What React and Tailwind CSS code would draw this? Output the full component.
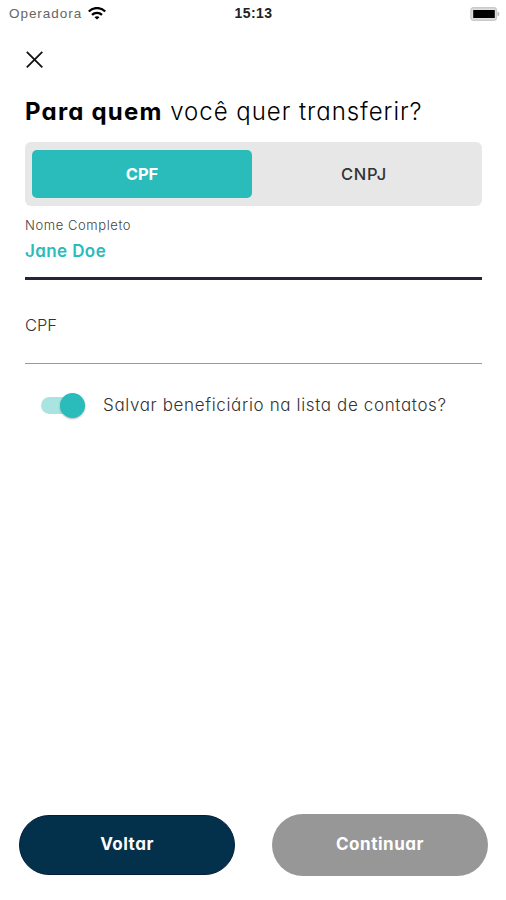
import { useState } from "react";

const WifiIcon = () => (
  <svg width="18" height="14" viewBox="0 0 18 14" fill="none" stroke="#000" strokeWidth="2.3">
    <path d="M.8 4.5C5.2-.1 12.8-.1 17.2 4.5" />
    <path d="M4 7.8c2.8-2.7 7.2-2.7 10 0" />
    <path d="M9 12.6 6.5 10.2c1.4-1.3 3.6-1.3 5 0z" fill="#000" stroke="none" />
  </svg>
);

const BatteryIcon = () => (
  <svg width="30" height="14" viewBox="0 0 30 14">
    <rect x="0.9" y="0.75" width="25.5" height="12.5" rx="2.5" fill="#dedede" stroke="#cacaca" strokeWidth="1.3" />
    <path d="M27.5 4.5c2.4.8 2.4 4.2 0 5z" fill="#b5b5b5" />
    <rect x="3.2" y="3" width="21.6" height="8" rx="0.3" fill="#000" />
  </svg>
);

const CloseIcon = () => (
  <svg width="18" height="18" viewBox="0 0 18 18" fill="none" stroke="#111" strokeWidth="1.8">
    <path d="M.8.8l15.5 15.5M16.3.8L.8 16.3" />
  </svg>
);

const StatusBar = () => (
  <div className="flex h-[27px] items-center pl-[9px] pr-[6px]">
    <div className="flex flex-1 items-center gap-[5px]">
      <span className="mt-px w-[74px] whitespace-nowrap font-['Liberation_Sans'] text-[13.5px] tracking-[0.95px] text-[#666]">
        Operadora
      </span>
      <WifiIcon />
    </div>
    <span className="mr-0.5 font-['Liberation_Sans'] text-[14px] font-bold tracking-[0.4px] text-[#222]">
      15:13
    </span>
    <div className="flex flex-1 justify-end">
      <BatteryIcon />
    </div>
  </div>
);

const App = () => {
  const [type, setType] = useState("CPF");
  const [save, setSave] = useState(true);

  return (
    <div className="flex h-[900px] w-[506px] flex-col overflow-hidden bg-white font-['Inter',sans-serif] [font-feature-settings:'cv11']">
      <StatusBar />

      <main className="flex flex-col pl-[25px] pr-6">
        <button className="mt-6 ml-px h-[18px] w-[18px]" aria-label="Fechar">
          <CloseIcon />
        </button>

        <h1 className="mt-[27px] h-8 whitespace-nowrap text-[24px] leading-8 font-light tracking-[0.96px] text-black">
          <span className="font-bold tracking-[1.2px]">Para quem</span> você quer transferir?
        </h1>

        {/* Tipo de documento */}
        <div className="mt-[14px] flex h-16 gap-[2px] rounded-md bg-[#e7e7e7] py-2 pr-[5px] pl-[7px]">
          {["CPF", "CNPJ"].map((item) => (
            <button
              key={item}
              onClick={() => setType(item)}
              className={`h-12 w-[220px] rounded-[5px] ${
                type === item
                  ? "bg-[#2abbbb] text-[16.5px] font-bold text-white"
                  : "text-[16.5px] font-medium tracking-[0.7px] text-[#333]"
              }`}
            >
              {item}
            </button>
          ))}
        </div>

        {/* Nome */}
        <label className="mt-[9px] flex h-[65px] flex-col border-b-[3px] border-[#25243a]">
          <span className="text-[13px] leading-5 font-light tracking-[0.58px] text-[#444]">
            Nome Completo
          </span>
          <span className="mt-1 text-[17px] leading-6 font-semibold tracking-[0.4px] text-[#2abbbb]">
            Jane Doe
          </span>
        </label>

        {/* CPF */}
        <label className="mt-[33px] flex h-[51px] flex-col border-b border-[#999]">
          <span className="text-[16.5px] leading-6 font-light text-[#333]">CPF</span>
        </label>

        <div className="mt-[29px] flex h-[25px] items-center pl-4">
          <button
            role="switch"
            aria-checked={save}
            onClick={() => setSave(!save)}
            className="flex h-[17px] w-11 items-center justify-end rounded-full bg-[#a9e4e1]"
          >
            <span className="h-[25px] w-[25px] rounded-full bg-[#2abbbb] shadow-[0_1px_2px_rgba(0,0,0,0.3)]" />
          </button>
          <span className="ml-[18px] whitespace-nowrap text-[17px] font-light tracking-[0.64px] text-[#333]">
            Salvar beneficiário na lista de contatos?
          </span>
        </div>
      </main>

      <footer className="mt-auto mb-6 flex items-center justify-between pr-[18px] pl-[19px]">
        <button className="h-[60px] w-[216px] rounded-full border border-[#051c3c] bg-[#03304b] text-[17px] font-bold tracking-[0.5px] text-white">
          Voltar
        </button>
        <button className="h-[62px] w-[216px] rounded-full bg-[#979797] text-[17px] font-bold tracking-[0.55px] text-white">
          Continuar
        </button>
      </footer>
    </div>
  );
};

export default App;
